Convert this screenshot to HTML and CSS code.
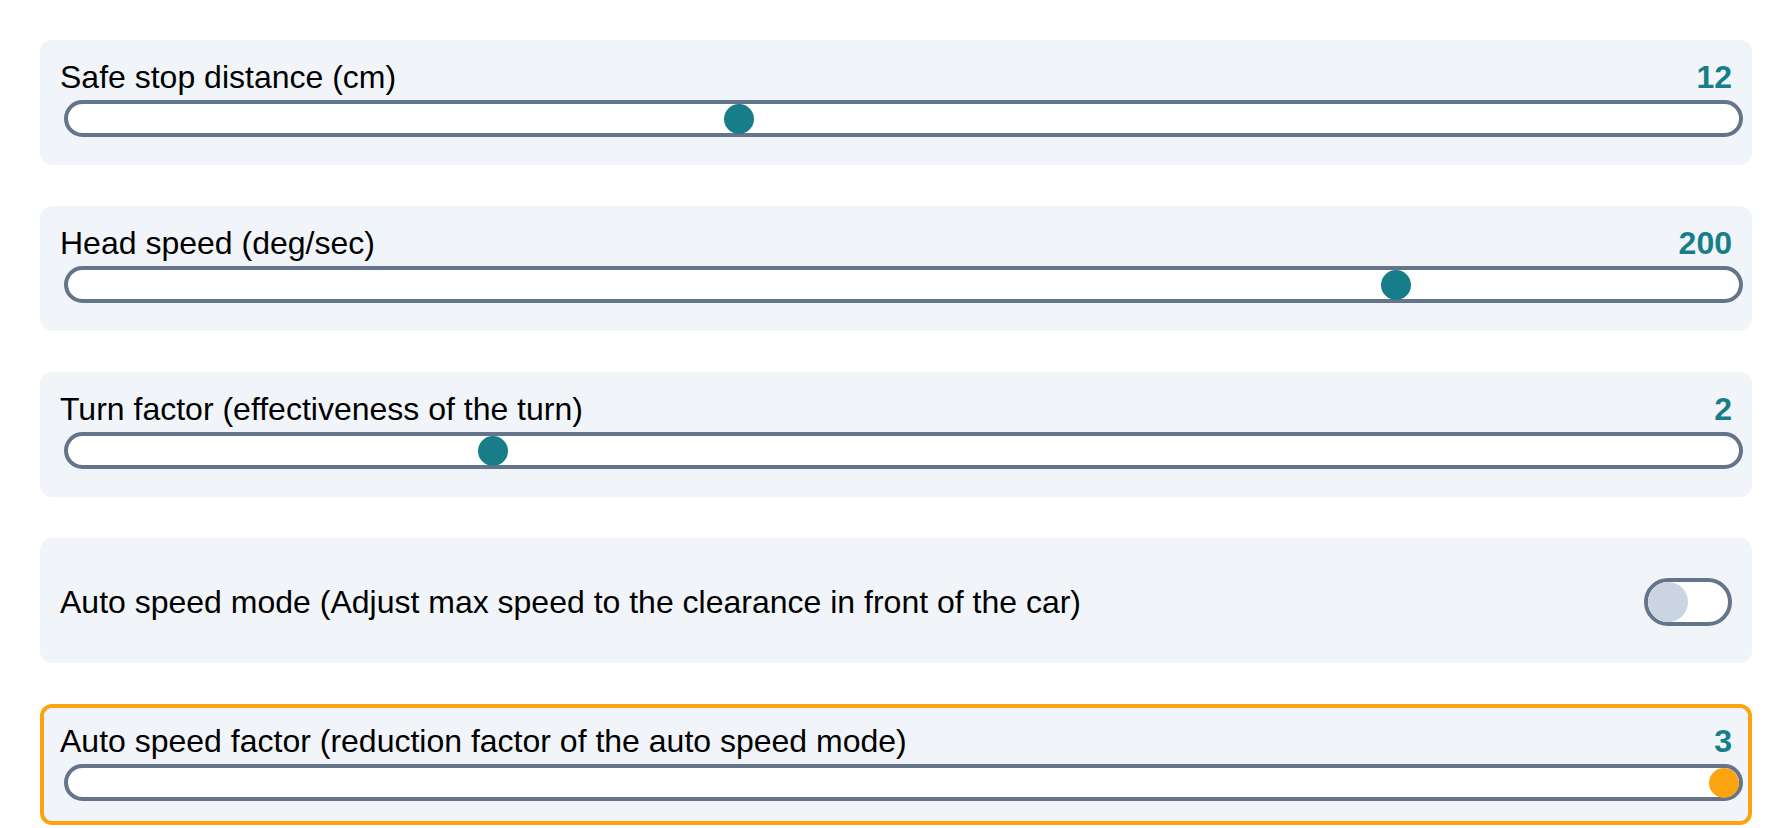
FILE: index.html
```html
<!DOCTYPE html>
<html lang="en">
<head>
<meta charset="utf-8">
<title>Settings</title>
<link rel="stylesheet" href="styles.css">
</head>
<body>
<main class="settings">
  <section class="card">
    <div class="card__head">
      <label class="card__label" for="stop">Safe stop distance (cm)</label>
      <span class="card__value">12</span>
    </div>
    <input class="slider" id="stop" type="range" min="0" max="30" value="12">
  </section>

  <section class="card">
    <div class="card__head">
      <label class="card__label" for="head">Head speed (deg/sec)</label>
      <span class="card__value">200</span>
    </div>
    <input class="slider" id="head" type="range" min="0" max="250" value="200">
  </section>

  <section class="card">
    <div class="card__head">
      <label class="card__label" for="turn">Turn factor (effectiveness of the turn)</label>
      <span class="card__value">2</span>
    </div>
    <input class="slider" id="turn" type="range" min="1" max="5" value="2">
  </section>

  <section class="card card--toggle">
    <span class="card__label">Auto speed mode (Adjust max speed to the clearance in front of the car)</span>
    <span class="toggle" role="switch" aria-checked="false"><span class="toggle__knob"></span></span>
  </section>

  <section class="card card--focus">
    <div class="card__head">
      <label class="card__label" for="factor">Auto speed factor (reduction factor of the auto speed mode)</label>
      <span class="card__value">3</span>
    </div>
    <input class="slider slider--active" id="factor" type="range" min="1" max="3" value="3">
  </section>
</main>
</body>
</html>
```

FILE: styles.css
```css
* { box-sizing: border-box; }

html, body {
  margin: 0;
  background: #ffffff;
}

body {
  padding: 40px 40px 0 40px;
  font-family: "Liberation Sans", Arial, sans-serif;
  color: #000;
  overflow: hidden;
}

.settings {
  display: flex;
  flex-direction: column;
  gap: 41px;
}

.card {
  background: #f1f5f9;
  border-radius: 12px;
  padding: 19px 20px 28px 20px;
  display: flex;
  flex-direction: column;
  gap: 5px;
}

.card__head {
  display: flex;
  justify-content: space-between;
  align-items: center;
}

.card__label {
  font-size: 32px;
  line-height: 36px;
  white-space: nowrap;
}

.card__value {
  font-size: 32px;
  line-height: 36px;
  font-weight: 700;
  color: #177e89;
}

.slider {
  -webkit-appearance: none;
  appearance: none;
  display: block;
  margin: 0 0 0 4px;
  width: calc(100% + 7px);
  height: 37px;
  border: 4px solid #64748b;
  border-radius: 999px;
  background: #ffffff;
  padding: 0;
  outline: none;
}

.slider::-webkit-slider-runnable-track {
  height: 29px;
  background: transparent;
  border: none;
}

.slider::-webkit-slider-thumb {
  -webkit-appearance: none;
  appearance: none;
  width: 30px;
  height: 30px;
  margin-top: -0.5px;
  border-radius: 50%;
  border: none;
  background: #177e89;
}

.slider--active::-webkit-slider-thumb {
  background: #fca311;
}

.card--toggle {
  flex-direction: row;
  align-items: center;
  justify-content: space-between;
  padding: 40px 20px 37px 20px;
}

.toggle {
  display: flex;
  align-items: center;
  width: 88px;
  height: 48px;
  border: 4px solid #64748b;
  border-radius: 999px;
  background: #ffffff;
}

.toggle__knob {
  width: 40px;
  height: 40px;
  border-radius: 50%;
  background: #cbd5e1;
}

.card--focus {
  border: 4px solid #fca311;
  padding: 15px 16px 20px 16px;
}
```
